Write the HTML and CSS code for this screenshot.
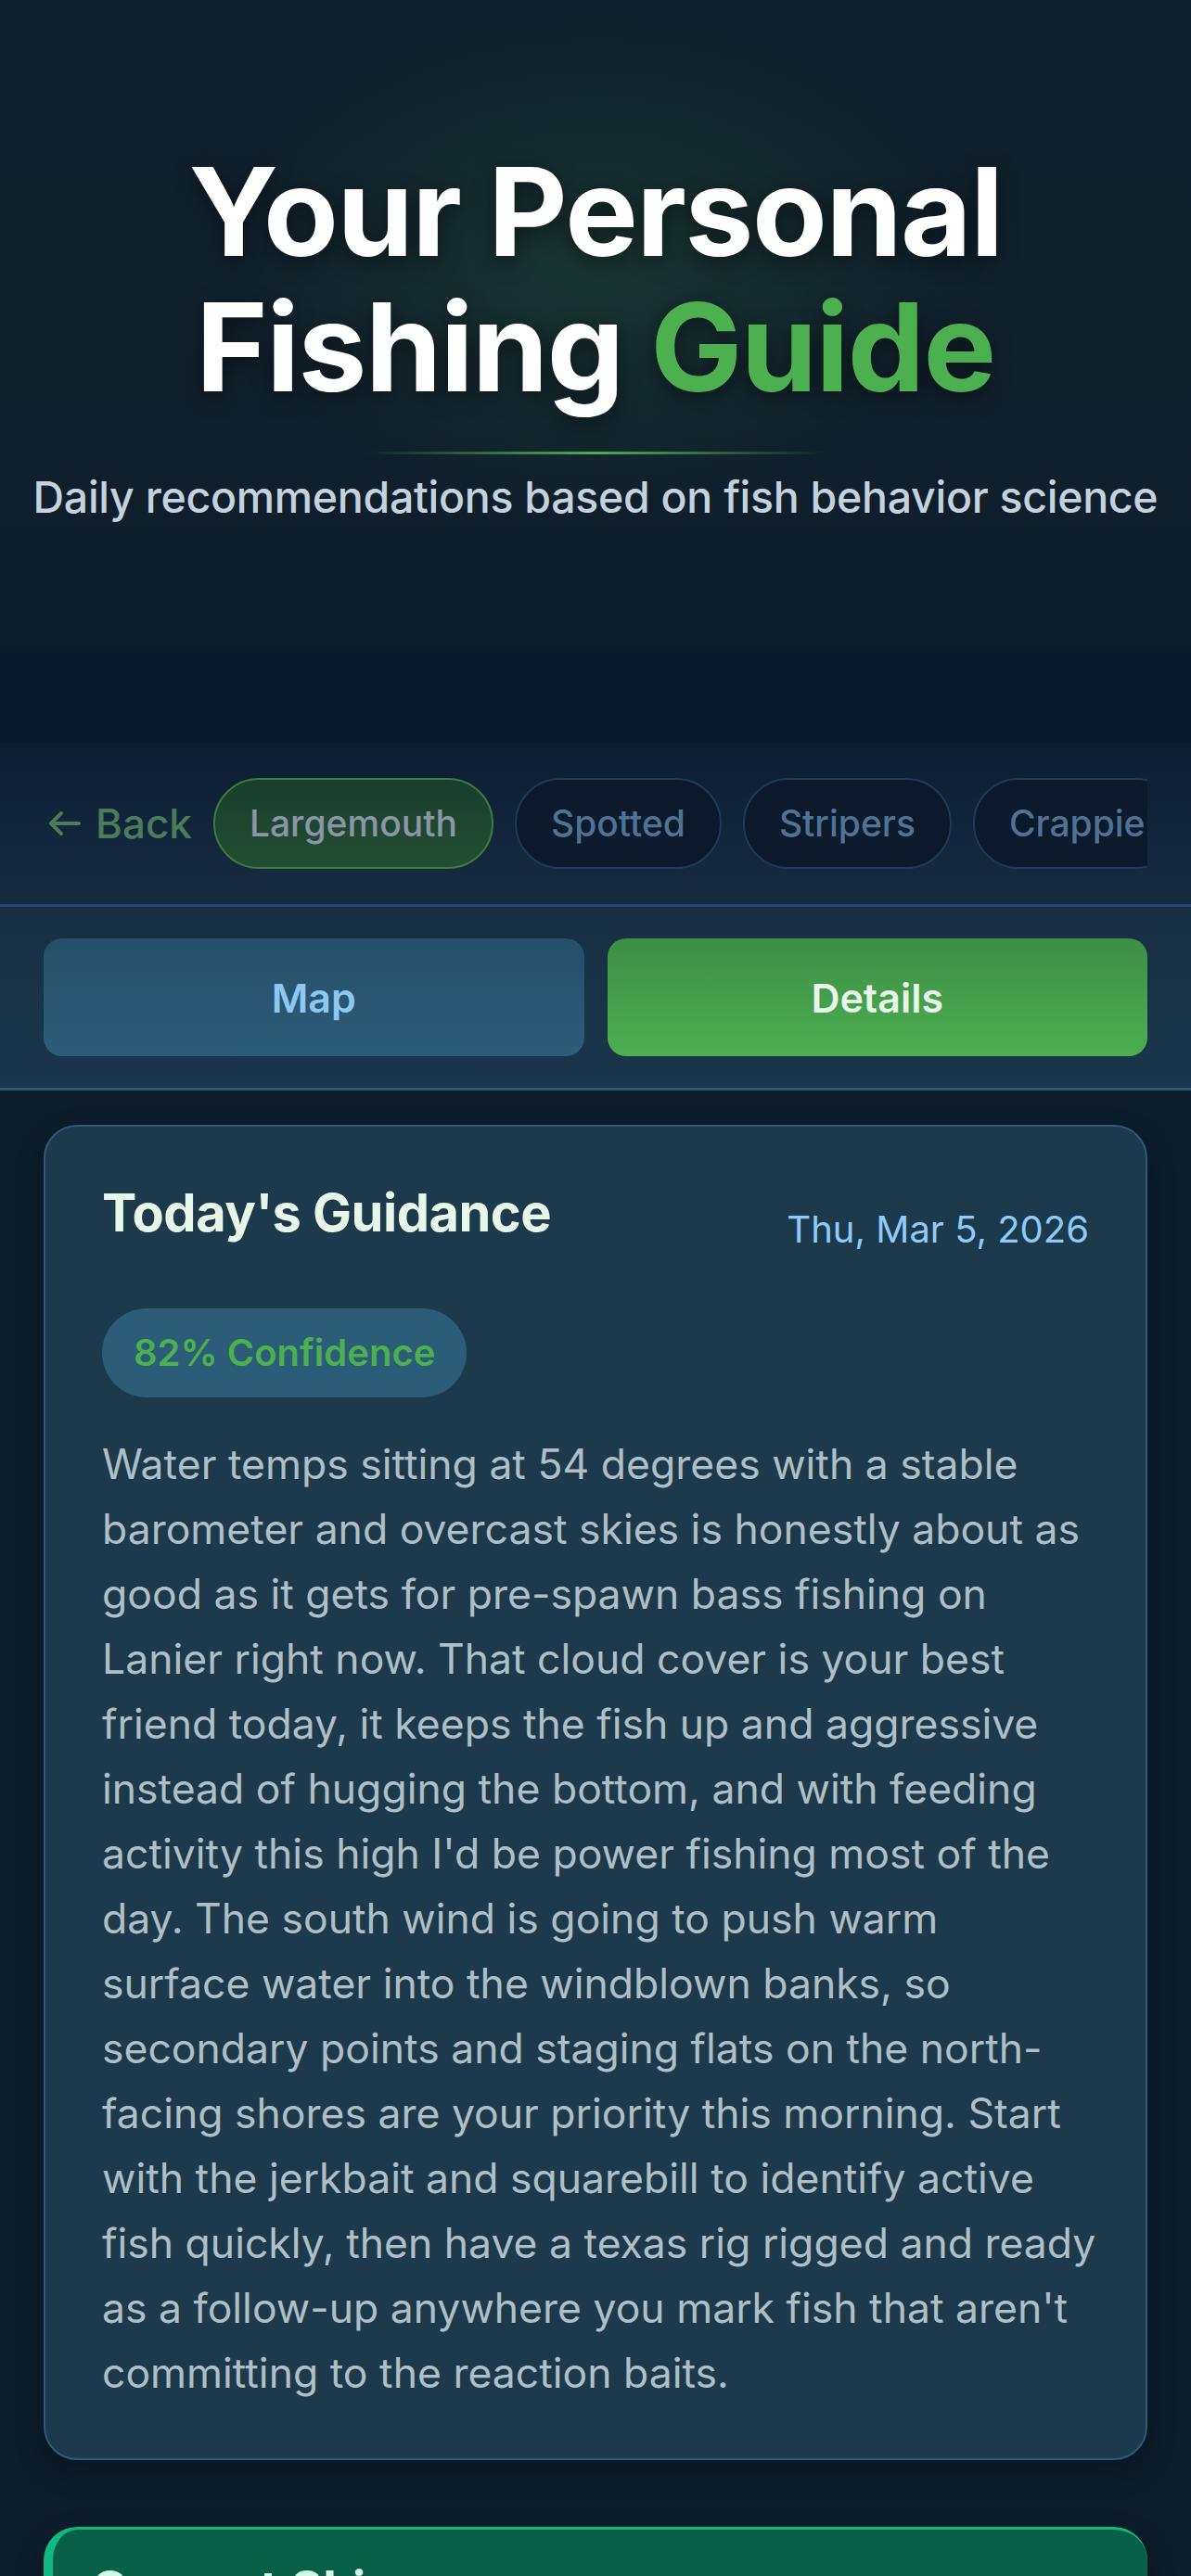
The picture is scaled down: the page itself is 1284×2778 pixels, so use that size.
FILE: index.html
```html
<!DOCTYPE html>
<html lang="en">
<head>
    <meta charset="UTF-8">
    <meta name="viewport" content="width=device-width, initial-scale=1.0">
    <title>Your Personal Fishing Guide</title>
    <link rel="stylesheet" href="styles.css">
</head>
<body>
    <!-- Hero -->
    <header class="hero">
        <h1 class="hero-title">Your Personal Fishing <span class="accent">Guide</span></h1>
        <div class="hero-rule"></div>
        <p class="hero-sub">Daily recommendations based on fish behavior science</p>
    </header>
    <div class="hero-foot"></div>

    <!-- Species picker -->
    <nav class="species-bar">
        <div class="species-scroll">
            <a class="back-link" href="#">
                <svg class="back-icon" viewBox="0 0 36 28" width="36" height="28" aria-hidden="true">
                    <path d="M34 14H4M15 3L4 14l11 11" fill="none" stroke="currentColor" stroke-width="4" stroke-linecap="round" stroke-linejoin="round"/>
                </svg>
                Back
            </a>
            <button class="chip active">Largemouth</button>
            <button class="chip">Spotted</button>
            <button class="chip">Stripers</button>
            <button class="chip">Crappie</button>
            <button class="chip">Catfish</button>
        </div>
    </nav>

    <!-- View tabs -->
    <div class="view-tabs">
        <button class="tab">Map</button>
        <button class="tab active">Details</button>
    </div>

    <main class="content">
        <!-- Today's guidance -->
        <section class="card guidance">
            <div class="card-head">
                <h2 class="card-title">Today's Guidance</h2>
                <span class="card-date">Thu, Mar 5, 2026</span>
            </div>
            <span class="confidence">82% Confidence</span>
            <p class="guidance-text">Water temps sitting at 54 degrees with a stable barometer and overcast skies is honestly about as good as it gets for pre-spawn bass fishing on Lanier right now. That cloud cover is your best friend today, it keeps the fish up and aggressive instead of hugging the bottom, and with feeding activity this high I'd be power fishing most of the day. The south wind is going to push warm surface water into the windblown banks, so secondary points and staging flats on the north-facing shores are your priority this morning. Start with the jerkbait and squarebill to identify active fish quickly, then have a texas rig rigged and ready as a follow-up anywhere you mark fish that aren't committing to the reaction baits.</p>
        </section>

        <!-- Current skies -->
        <section class="card skies">
            <h3 class="skies-title">Current Skies</h3>
            <p class="skies-text">Overcast, 58°F, wind S 8 mph</p>
        </section>
    </main>
</body>
</html>
```

FILE: styles.css
```css
body {
    margin: 0;
    padding: 0;
    background-color: #0d1d2b;
    font-family: Inter, "Noto Sans", sans-serif;
    color: #b0bec5;
}

/* Hero */
.hero {
    height: 698px;
    box-sizing: border-box;
    padding-top: 155px;
    text-align: center;
    background:
        radial-gradient(ellipse 560px 380px at 50% 40%, rgba(76, 175, 80, 0.14), transparent 70%),
        linear-gradient(180deg, #0f1f2b 0%, #11212c 50%, #0e1d2a 100%);
}

.hero-title {
    max-width: 1000px;
    margin: 0 auto;
    font-size: 132px;
    line-height: 146px;
    font-weight: 700;
    letter-spacing: -1.5px;
    color: #ffffff;
    text-shadow: 0 6px 24px rgba(0, 0, 0, 0.45);
}

.hero-title .accent {
    color: #4caf50;
}

.hero-rule {
    width: 500px;
    height: 3px;
    margin: 40px auto 0;
    background: linear-gradient(90deg, transparent, #4caf50, transparent);
}

.hero-sub {
    margin: 18px 0 0;
    font-size: 46.5px;
    font-weight: 500;
    letter-spacing: -0.3px;
    color: #c3d2dc;
}

.hero-foot {
    height: 104px;
    background-color: #0b192c;
}

/* Species picker */
.species-bar {
    padding: 37px 47px 38px 51px;
    background: linear-gradient(180deg, #0e1e33 0%, #172b40 100%);
    border-bottom: 3px solid #24466a;
}

.species-scroll {
    display: flex;
    align-items: center;
    gap: 23px;
    overflow: hidden;
}

.back-link {
    display: flex;
    align-items: center;
    gap: 16px;
    flex-shrink: 0;
    font-size: 44px;
    font-weight: 500;
    color: #4a7c59;
    text-decoration: none;
}

.chip {
    flex-shrink: 0;
    padding: 25px 37px;
    font-family: inherit;
    font-size: 39px;
    line-height: 44px;
    font-weight: 500;
    color: #4f7396;
    background-color: #0c1a2b;
    border: 2px solid #1d3a57;
    border-radius: 60px;
}

.chip.active {
    color: #8c95a5;
    background: linear-gradient(180deg, #1b3e2f 0%, #214f32 100%);
    border-color: #3a7d40;
}

/* View tabs */
.view-tabs {
    display: grid;
    grid-template-columns: 1fr 1fr;
    gap: 25px;
    padding: 34px 47px 34px;
    background: linear-gradient(180deg, #172e42 0%, #1b374b 100%);
    border-bottom: 3px solid #2b5878;
}

.tab {
    height: 127px;
    font-family: inherit;
    font-size: 43px;
    font-weight: 600;
    border: none;
    border-radius: 20px;
    color: #8ec8f0;
    background: linear-gradient(180deg, #254f6a 0%, #2c5d7a 100%);
}

.tab.active {
    color: #e8f5e9;
    background: linear-gradient(180deg, #3e8e47 0%, #4caf50 100%);
}

/* Cards */
.content {
    padding: 37px 47px 60px;
}

.card {
    border-radius: 36px;
    box-shadow: 0 12px 30px rgba(0, 0, 0, 0.25);
}

.guidance {
    padding: 60px 52px 57px 61px;
    background-color: #1c3a4b;
    border: 2px solid #2b5b7a;
}

.card-head {
    display: flex;
    justify-content: space-between;
    align-items: flex-start;
}

.card-title {
    margin: 0;
    font-size: 56px;
    line-height: 1.2;
    font-weight: 700;
    color: #e8f5e9;
    letter-spacing: -0.5px;
}

.card-date {
    margin-top: 27px;
    margin-right: 9px;
    font-size: 40px;
    line-height: 1.2;
    color: #90caf9;
}

.confidence {
    display: inline-block;
    margin-top: 61px;
    padding: 24px 34px;
    font-size: 40px;
    line-height: 48px;
    font-weight: 600;
    color: #4caf50;
    background-color: #2b5c78;
    border-radius: 60px;
}

.guidance-text {
    margin: 37px 0 0;
    font-size: 44.5px;
    line-height: 70px;
    color: #b0bec5;
}

.skies {
    margin-top: 72px;
    padding: 32px 41px 50px;
    background-color: #065f46;
    border-top: 3px solid #10b981;
    border-left: 10px solid #10b981;
}

.skies-title {
    margin: 0;
    font-size: 54px;
    line-height: 1.2;
    font-weight: 700;
    color: #d1fae5;
}

.skies-text {
    margin: 20px 0 0;
    font-size: 40px;
    color: #a7f3d0;
}
```
